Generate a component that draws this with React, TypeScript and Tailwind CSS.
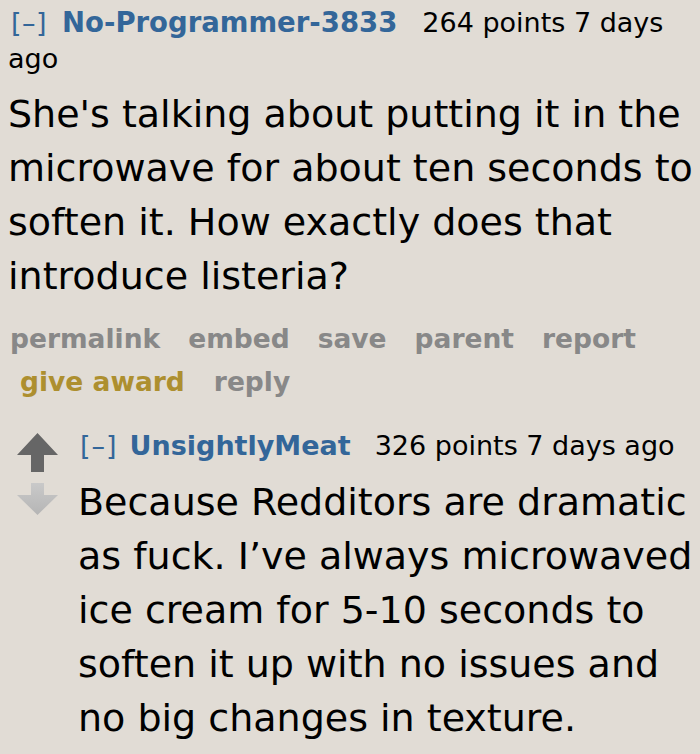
export default function App() {
  const font = { fontFamily: '"DejaVu Sans", Verdana, sans-serif' };
  return (
    <div className="w-[700px] h-[754px] bg-[#e1dcd5] overflow-hidden" style={font}>
      <div className="pl-[8px] pt-[4px]">
        <div className="text-[27px] leading-[36px] text-black whitespace-nowrap">
          <span className="ml-[3px] text-[#336699] tracking-[0.5px]">[–]</span>
          <span className="ml-[15px] text-[#336699] font-bold text-[27.5px]">No-Programmer-3833</span>
          <span className="ml-[25px]">264 points 7 days</span>
          <br />
          ago
        </div>
        <div className="mt-[10px] text-[38px] leading-[54px] text-black whitespace-nowrap">
          She's talking about putting it in the
          <br />
          microwave for about ten seconds to
          <br />
          soften it. How exactly does that
          <br />
          introduce listeria?
        </div>
        <div className="mt-[14px] text-[26.5px] leading-[43px] font-bold text-[#888888]">
          <div className="flex gap-[28px] pl-[2px]">
            <span>permalink</span>
            <span>embed</span>
            <span>save</span>
            <span>parent</span>
            <span>report</span>
          </div>
          <div className="flex gap-[29px] pl-[12px]">
            <span className="text-[#ad8f2f]">give award</span>
            <span>reply</span>
          </div>
        </div>
      </div>
      <div className="flex mt-[25px] pl-[17px]">
        <div className="flex flex-col items-center w-[41px] pt-[5px] gap-[11px]">
          <svg width="41" height="39" viewBox="0 0 41 39">
            <polygon points="20.5,0 41,22 27,22 27,39 14,39 14,22 0,22" fill="#666666" />
          </svg>
          <svg width="41" height="32" viewBox="0 0 41 32">
            <defs>
              <linearGradient id="dg" x1="0" y1="0" x2="0" y2="1">
                <stop offset="0" stopColor="#c9c9c9" />
                <stop offset="1" stopColor="#b5b5b5" />
              </linearGradient>
            </defs>
            <polygon points="14,0 27,0 27,12 41,12 20.5,32 0,12 14,12" fill="url(#dg)" />
          </svg>
        </div>
        <div className="ml-[20px]">
          <div className="text-[27px] leading-[36px] text-black whitespace-nowrap">
            <span className="ml-[2px] text-[#336699] tracking-[1px]">[–]</span>
            <span className="ml-[12px] text-[#336699] font-bold">UnsightlyMeat</span>
            <span className="ml-[24px]">326 points 7 days ago</span>
          </div>
          <div className="mt-[11px] text-[38px] leading-[54px] text-black whitespace-nowrap">
            Because Redditors are dramatic
            <br />
            as fuck. I’ve always microwaved
            <br />
            ice cream for 5-10 seconds to
            <br />
            soften it up with no issues and
            <br />
            no big changes in texture.
          </div>
        </div>
      </div>
    </div>
  );
}
